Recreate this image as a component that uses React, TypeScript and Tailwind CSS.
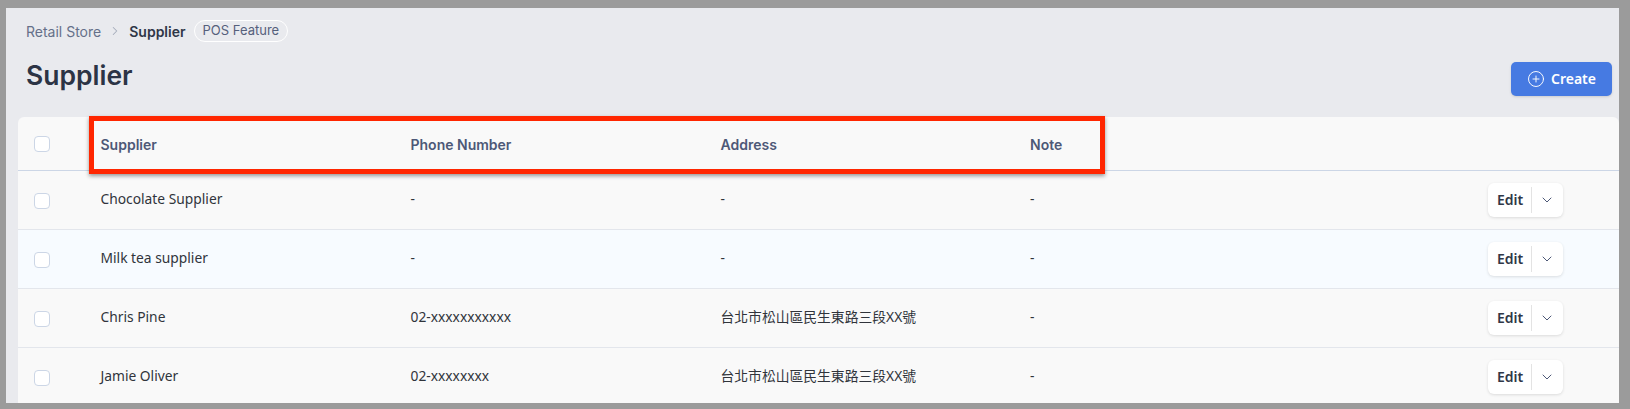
import { ChevronDown, ChevronRight, CirclePlus } from "lucide-react";

const rows = [
  { name: "Chocolate Supplier", phone: "-", address: "-", note: "-", bg: "bg-[#f9f9f9]" },
  { name: "Milk tea supplier", phone: "-", address: "-", note: "-", bg: "bg-[#f7fbff]" },
  { name: "Chris Pine", phone: "02-xxxxxxxxxxx", address: "台北市松山區民生東路三段XX號", note: "-", bg: "bg-[#f9f9f9]" },
  { name: "Jamie Oliver", phone: "02-xxxxxxxx", address: "台北市松山區民生東路三段XX號", note: "-", bg: "bg-[#f9f9f9]" },
];

function Checkbox({ className = "" }: { className?: string }) {
  return <div className={`w-4 h-4 rounded-[4px] border border-[#ccd6e6] bg-white ml-4 ${className}`} />;
}

export default function App() {
  return (
    <div className="relative h-[409px] w-[1630px] overflow-hidden bg-[#9b9b9b] pt-2 pr-[11px] pb-[6px] pl-[6px] font-['Noto_Sans','Noto_Sans_CJK_TC',sans-serif]">
      <div className="h-full bg-[#e9eaee] pl-3 overflow-hidden">
        <div className="flex items-center h-[46px] pl-[8px] text-[14px] font-['Inter',sans-serif]">
          <span className="text-[#657089]">Retail Store</span>
          <ChevronRight className="w-[14px] h-[14px] mx-[7px] text-[#a6adbb]" strokeWidth={1.75} />
          <span className="font-semibold text-[#2f3747]">Supplier</span>
          <span className="ml-[8px] h-[22px] px-2 flex items-center rounded-full border border-white text-[13px] text-[#55607c]">POS Feature</span>
        </div>
        <div className="flex items-start justify-between h-[63px] pl-[8px]">
          <h1 className="text-[26.5px] leading-[32px] mt-[5px] font-semibold text-[#2c3445] font-['Inter',sans-serif]">Supplier</h1>
          <button className="mt-[8px] mr-[7px] w-[101px] h-[34px] rounded-[5px] bg-[#467ae2] text-white text-[14px] font-semibold flex items-center justify-center gap-[6px] shadow-sm">
            <CirclePlus className="w-[18px] h-[18px]" strokeWidth={1.25} />
            <span className="pb-[1px]">Create</span>
          </button>
        </div>
        <div className="rounded-t-[6px] bg-[#f9f9f9] text-[13.8px] text-[#30343b]">
          <div className="grid grid-cols-[82.5px_310px_310px_309.5px_1fr] items-center h-[54px] border-b border-[#ccd6e6] text-[14px] font-semibold text-[#4d5877] font-['Inter',sans-serif]">
            <Checkbox />
            <div className="pt-[1px]">Supplier</div>
            <div className="pt-[1px]">Phone Number</div>
            <div className="pt-[1px]">Address</div>
            <div className="pt-[1px]">Note</div>
          </div>
          {rows.map((row) => (
            <div key={row.name} className={`grid grid-cols-[82.5px_310px_310px_309.5px_1fr] items-center h-[59px] border-b border-[#e3e6ec] ${row.bg}`}>
              <Checkbox className="mt-[2px]" />
              <div className="pb-[2px]">{row.name}</div>
              <div className="pb-[2px]">{row.phone}</div>
              <div className="pb-[2px]">{row.address}</div>
              <div className="flex items-center justify-between pr-[56px]">
                <span className="pb-[2px]">{row.note}</span>
                <div className="flex items-center h-[34px] w-[75px] rounded-[6px] bg-white shadow-[0_1px_3px_rgba(0,0,0,0.12)]">
                  <span className="w-[43px] pl-[9px] pb-[2px] text-[14px] font-semibold text-[#2f3747]">Edit</span>
                  <div className="w-px h-[26px] bg-[#e3e3e3]" />
                  <ChevronDown className="ml-[7px] w-[16px] h-[16px] text-[#4d5877]" strokeWidth={1.5} />
                </div>
              </div>
            </div>
          ))}
        </div>
      </div>
      <div className="absolute left-[89px] top-[116px] w-[1016px] h-[58px] border-[5px] border-[#ff2600] shadow-[0_2px_4px_rgba(0,0,0,0.4)]" />
    </div>
  );
}
